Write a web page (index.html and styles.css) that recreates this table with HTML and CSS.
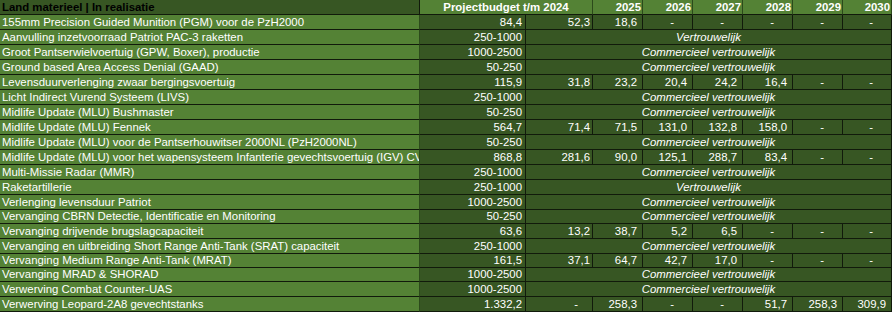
FILE: index.html
```html
<!DOCTYPE html>
<html lang="nl">
<head>
<meta charset="utf-8">
<title>Land materieel | In realisatie</title>
<link rel="stylesheet" href="styles.css">
</head>
<body>
<table class="sheet">
  <colgroup>
    <col class="c-name"><col class="c-budget"><col class="c-tm"><col class="c-yr"><col class="c-yr"><col class="c-yr"><col class="c-yr"><col class="c-yr"><col class="c-last">
  </colgroup>
  <thead>
    <tr class="h15">
      <th class="hd-name">Land materieel | In realisatie</th>
      <th class="hd-budget" colspan="2">Projectbudget t/m 2024</th>
      <th class="hd-yr">2025</th><th class="hd-yr">2026</th><th class="hd-yr">2027</th><th class="hd-yr">2028</th><th class="hd-yr">2029</th><th class="hd-yr">2030</th>
    </tr>
  </thead>
  <tbody>
    <tr class="h15"><td class="name">155mm Precision Guided Munition (PGM) voor de PzH2000</td><td class="bud">84,4</td><td class="tm">52,3</td><td class="yr">18,6</td><td class="yr dash">-</td><td class="yr dash">-</td><td class="yr dash">-</td><td class="yr dash">-</td><td class="yr dash">-</td></tr>
    <tr class="h15"><td class="name">Aanvulling inzetvoorraad Patriot PAC-3 raketten</td><td class="bud">250-1000</td><td class="conf" colspan="7">Vertrouwelijk</td></tr>
    <tr class="h15"><td class="name">Groot Pantserwielvoertuig (GPW, Boxer), productie</td><td class="bud">1000-2500</td><td class="conf" colspan="7">Commercieel vertrouwelijk</td></tr>
    <tr class="h15"><td class="name">Ground based Area Access Denial (GAAD)</td><td class="bud">50-250</td><td class="conf" colspan="7">Commercieel vertrouwelijk</td></tr>
    <tr class="h15"><td class="name">Levensduurverlenging zwaar bergingsvoertuig</td><td class="bud">115,9</td><td class="tm">31,8</td><td class="yr">23,2</td><td class="yr">20,4</td><td class="yr">24,2</td><td class="yr">16,4</td><td class="yr dash">-</td><td class="yr dash">-</td></tr>
    <tr class="h15"><td class="name">Licht Indirect Vurend Systeem (LIVS)</td><td class="bud">250-1000</td><td class="conf" colspan="7">Commercieel vertrouwelijk</td></tr>
    <tr class="h15"><td class="name">Midlife Update (MLU) Bushmaster</td><td class="bud">50-250</td><td class="conf" colspan="7">Commercieel vertrouwelijk</td></tr>
    <tr class="h15"><td class="name">Midlife Update (MLU) Fennek</td><td class="bud">564,7</td><td class="tm">71,4</td><td class="yr">71,5</td><td class="yr">131,0</td><td class="yr">132,8</td><td class="yr">158,0</td><td class="yr dash">-</td><td class="yr dash">-</td></tr>
    <tr class="h15"><td class="name">Midlife Update (MLU) voor de Pantserhouwitser 2000NL (PzH2000NL)</td><td class="bud">50-250</td><td class="conf" colspan="7">Commercieel vertrouwelijk</td></tr>
    <tr class="h15"><td class="name">Midlife Update (MLU) voor het wapensysteem Infanterie gevechtsvoertuig (IGV) CV90</td><td class="bud">868,8</td><td class="tm">281,6</td><td class="yr">90,0</td><td class="yr">125,1</td><td class="yr">288,7</td><td class="yr">83,4</td><td class="yr dash">-</td><td class="yr dash">-</td></tr>
    <tr class="h15"><td class="name">Multi-Missie Radar (MMR)</td><td class="bud">250-1000</td><td class="conf" colspan="7">Commercieel vertrouwelijk</td></tr>
    <tr class="h15"><td class="name">Raketartillerie</td><td class="bud">250-1000</td><td class="conf" colspan="7">Vertrouwelijk</td></tr>
    <tr class="h15"><td class="name">Verlenging levensduur Patriot</td><td class="bud">1000-2500</td><td class="conf" colspan="7">Commercieel vertrouwelijk</td></tr>
    <tr class="h14"><td class="name">Vervanging CBRN Detectie, Identificatie en Monitoring</td><td class="bud">50-250</td><td class="conf" colspan="7">Commercieel vertrouwelijk</td></tr>
    <tr class="h15"><td class="name">Vervanging drijvende brugslagcapaciteit</td><td class="bud">63,6</td><td class="tm">13,2</td><td class="yr">38,7</td><td class="yr">5,2</td><td class="yr">6,5</td><td class="yr dash">-</td><td class="yr dash">-</td><td class="yr dash">-</td></tr>
    <tr class="h15"><td class="name">Vervanging en uitbreiding Short Range Anti-Tank (SRAT) capaciteit</td><td class="bud">250-1000</td><td class="conf" colspan="7">Commercieel vertrouwelijk</td></tr>
    <tr class="h14"><td class="name">Vervanging Medium Range Anti-Tank (MRAT)</td><td class="bud">161,5</td><td class="tm">37,1</td><td class="yr">64,7</td><td class="yr">42,7</td><td class="yr">17,0</td><td class="yr dash">-</td><td class="yr dash">-</td><td class="yr dash">-</td></tr>
    <tr class="h14"><td class="name">Vervanging MRAD &amp; SHORAD</td><td class="bud">1000-2500</td><td class="conf" colspan="7">Commercieel vertrouwelijk</td></tr>
    <tr class="h15"><td class="name">Verwerving Combat Counter-UAS</td><td class="bud">1000-2500</td><td class="conf" colspan="7">Commercieel vertrouwelijk</td></tr>
    <tr class="h15"><td class="name">Verwerving Leopard-2A8 gevechtstanks</td><td class="bud">1.332,2</td><td class="tm dash">-</td><td class="yr">258,3</td><td class="yr dash">-</td><td class="yr dash">-</td><td class="yr">51,7</td><td class="yr">258,3</td><td class="yr">309,9</td></tr>
  </tbody>
</table>
</body>
</html>
```
FILE: styles.css
```css
html, body {
  margin: 0;
  padding: 0;
  background: #ffffff;
}

.sheet {
  table-layout: fixed;
  border-collapse: separate;
  border-spacing: 0;
  width: 892px;
  font-family: "Liberation Sans", Arial, sans-serif;
  font-size: 11.4px;
  color: #ffffff;
}

.c-name { width: 420px; }
.c-budget { width: 106px; }
.c-tm { width: 67px; }
.c-yr { width: 50px; }
.c-last { width: 49px; }

.sheet th,
.sheet td {
  padding: 0;
  line-height: 14px;
  white-space: nowrap;
  overflow: hidden;
  border-right: 1px solid #111a0b;
  border-bottom: 1px solid #111a0b;
  background: #375623;
  vertical-align: bottom;
}

.h15 > th,
.h15 > td { height: 14px; }
.h14 > th,
.h14 > td { height: 13px; line-height: 13px; }

.sheet th {
  font-weight: bold;
  background: #548235;
  text-align: right;
}

.sheet th.hd-name {
  background: #375623;
  color: #000000;
  text-align: left;
  padding-left: 2px;
}

.sheet th.hd-budget {
  text-align: center;
  border-right-color: #2c4a1b;
}

.sheet th.hd-yr {
  padding-right: 1px;
  border-right-color: #2c4a1b;
}

.sheet td.name {
  background: #548235;
  text-align: left;
  padding-left: 2px;
  text-overflow: clip;
  border-right-color: #2c4a1b;
}

.bud { text-align: right; padding-right: 3px !important; }
.tm { text-align: right; padding-right: 2px !important; }
.yr { text-align: right; padding-right: 5px !important; }
.yr.dash { padding-right: 18px !important; }
.tm.dash { padding-right: 14px !important; }

.conf {
  text-align: center;
  font-style: italic;
}
```
